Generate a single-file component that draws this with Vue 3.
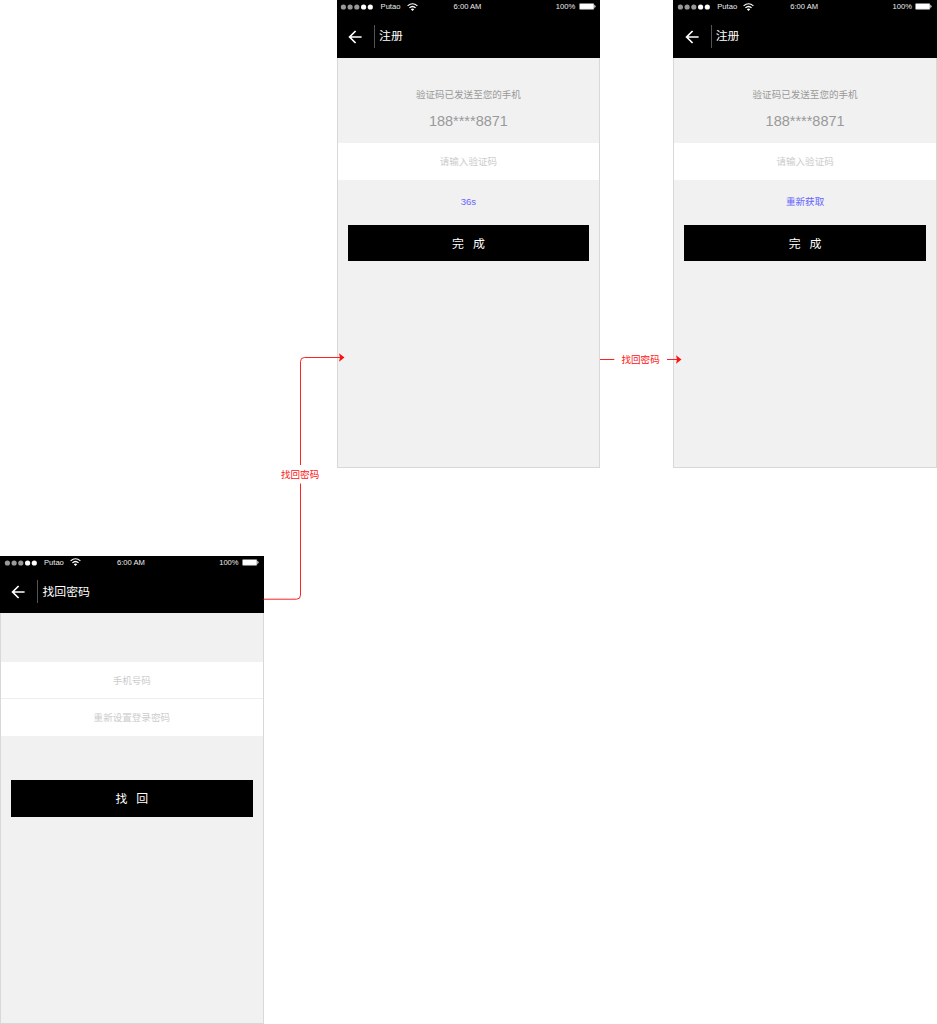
<script setup>
const screens = [
  {
    id: 'code-wait', title: '注册', hint: '验证码已发送至您的手机', phone: '188****8871',
    fields: ['请输入验证码'], link: '36s', button: ['完', '成'],
  },
  {
    id: 'code-retry', title: '注册', hint: '验证码已发送至您的手机', phone: '188****8871',
    fields: ['请输入验证码'], link: '重新获取', button: ['完', '成'],
  },
  {
    id: 'recover', title: '找回密码', hint: '', phone: '',
    fields: ['手机号码', '重新设置登录密码'], link: '', button: ['找', '回'],
  },
]
</script>

<template>
  <main class="board">
    <section v-for="s in screens" :key="s.id" class="screen" :class="s.id">
      <header class="head">
        <div class="status">
          <svg class="dots" viewBox="0 0 34 6">
            <g fill="#999">
              <circle cx="3.4" cy="3" r="2.6" />
              <circle cx="10.1" cy="3" r="2.6" />
              <circle cx="16.8" cy="3" r="2.6" />
            </g>
            <g fill="#fff">
              <circle cx="23.6" cy="3" r="2.6" />
              <circle cx="30.3" cy="3" r="2.6" />
            </g>
          </svg>
          <span class="carrier">Putao</span>
          <svg class="wifi" viewBox="0 0 11 8">
            <g fill="none" stroke="#fff" stroke-width="1.2">
              <path d="M.6 2.9Q5.5-1.4 10.4 2.9" />
              <path d="M2.4 4.9Q5.5 2.1 8.6 4.9" />
            </g>
            <path d="M3.8 6.2Q5.5 4.8 7.2 6.2L5.5 8Z" fill="#fff" />
          </svg>
          <span class="time">6:00 AM</span>
          <span class="percent">100%</span>
          <svg class="battery" viewBox="0 0 17 7">
            <rect x=".4" y=".4" width="14.6" height="6" rx="1" fill="#fff" stroke="#777" stroke-width=".6" />
            <path d="M15.7 2.2Q17 3.4 15.7 4.6Z" fill="#fff" stroke="#fff" stroke-width=".5" />
          </svg>
        </div>
        <div class="nav">
          <svg class="back" viewBox="0 0 14 14">
            <path d="M13.6 7H1.6M7.6 1L1.6 7L7.6 13" fill="none" stroke="#fff" stroke-width="1.7" />
          </svg>
          <i class="rule"></i>
          <h1>{{ s.title }}</h1>
        </div>
      </header>
      <div class="intro">
        <p v-if="s.hint" class="hint">{{ s.hint }}</p>
        <p v-if="s.phone" class="number">{{ s.phone }}</p>
      </div>
      <div class="fields">
        <div v-for="f in s.fields" :key="f" class="field">{{ f }}</div>
      </div>
      <div class="link">{{ s.link }}</div>
      <div class="button"><span v-for="c in s.button" :key="c">{{ c }}</span></div>
    </section>

    <svg class="flows" viewBox="0 0 937 1024">
      <g fill="none" stroke="#ff2020" stroke-width="1">
        <path d="M263.5 599.2H296.5Q300.5 599.2 300.5 595.2V483.5M300.5 465V361.5Q300.5 357.5 304.5 357.5H341" />
        <path d="M600 359.5H614.3M667 359.5H678" />
      </g>
      <g fill="#ff1010">
        <path d="M339 353.3L344.5 357.5L339 361.7L340 357.5Z" />
        <path d="M676 355.3L681.5 359.5L676 363.7L677 359.5Z" />
      </g>
    </svg>
    <span class="flow-label first">找回密码</span>
    <span class="flow-label second">找回密码</span>
  </main>
</template>

<style>
body { margin: 0; background: #fff; }
</style>

<style scoped>
.board {
  position: relative;
  width: 937px;
  height: 1024px;
  overflow: hidden;
  font-family: "Liberation Sans", "Noto Sans CJK SC", sans-serif;
  font-size: 9.55px;
}
.screen {
  position: absolute;
  box-sizing: border-box;
  width: 263.6px;
  height: 468.4px;
  background: #f1f1f1;
  box-shadow: inset 0 0 0 1px #d8d8d8;
  display: flex;
  flex-direction: column;
}
.code-wait { left: 336.6px; top: 0; }
.code-retry { left: 673.3px; top: 0; }
.recover { left: 0; top: 555.6px; }
.head { height: 57.6px; background: #000; color: #fff; flex: none; }
.status {
  height: 13px;
  display: flex;
  align-items: center;
  font-size: 7.6px;
  line-height: 13px;
  color: #eee;
  white-space: nowrap;
}
.dots { width: 34px; height: 6px; margin-left: 3.8px; flex: none; position: relative; top: .6px; }
.carrier { width: 20px; margin-left: 6.2px; }
.wifi { width: 11px; height: 8px; margin-left: 6px; flex: none; }
.time { width: 29px; margin-left: 36px; }
.percent { width: 20px; margin-left: 73.2px; }
.battery { width: 17px; height: 7px; margin-left: 3px; flex: none; }
.nav { height: 44.6px; display: flex; align-items: center; }
.back { width: 14px; height: 14px; margin: 3px 0 0 11.3px; }
.rule { width: 1px; height: 23px; margin: 2px 4px 0 12.1px; background: #555; }
h1 { margin: 2.4px 0 0; font-size: 11.9px; font-weight: 400; line-height: 16px; }
.intro {
  height: 85.8px;
  flex: none;
  box-sizing: border-box;
  padding-top: 29px;
  text-align: center;
  color: #999;
}
.recover .intro { height: 48.4px; }
.hint { margin: 0; line-height: 16px; }
.number { margin: 8.4px 0 0; font-size: 14.5px; line-height: 20px; }
.fields { margin: 0 1px; background: #fff; flex: none; }
.field { height: 36.6px; line-height: 37.2px; text-align: center; color: #ccc; }
.recover .field { line-height: 37.4px; }
.field + .field { border-top: 1px solid #eee; }
.link { height: 44.6px; line-height: 44.6px; text-align: center; color: #6666ff; flex: none; }
.button {
  height: 36.6px;
  box-sizing: border-box;
  padding-top: 1.6px;
  margin: 0 11px;
  background: #000;
  color: #fff;
  font-size: 11.9px;
  font-weight: 400;
  line-height: 16px;
  display: flex;
  justify-content: center;
  align-items: center;
  gap: 9px;
  flex: none;
}
.flows { position: absolute; left: 0; top: 0; width: 937px; height: 1024px; }
.flow-label { position: absolute; line-height: 14px; color: #ff1010; white-space: nowrap; }
.first { left: 281px; top: 467.5px; }
.second { left: 621.5px; top: 352.5px; }
</style>
